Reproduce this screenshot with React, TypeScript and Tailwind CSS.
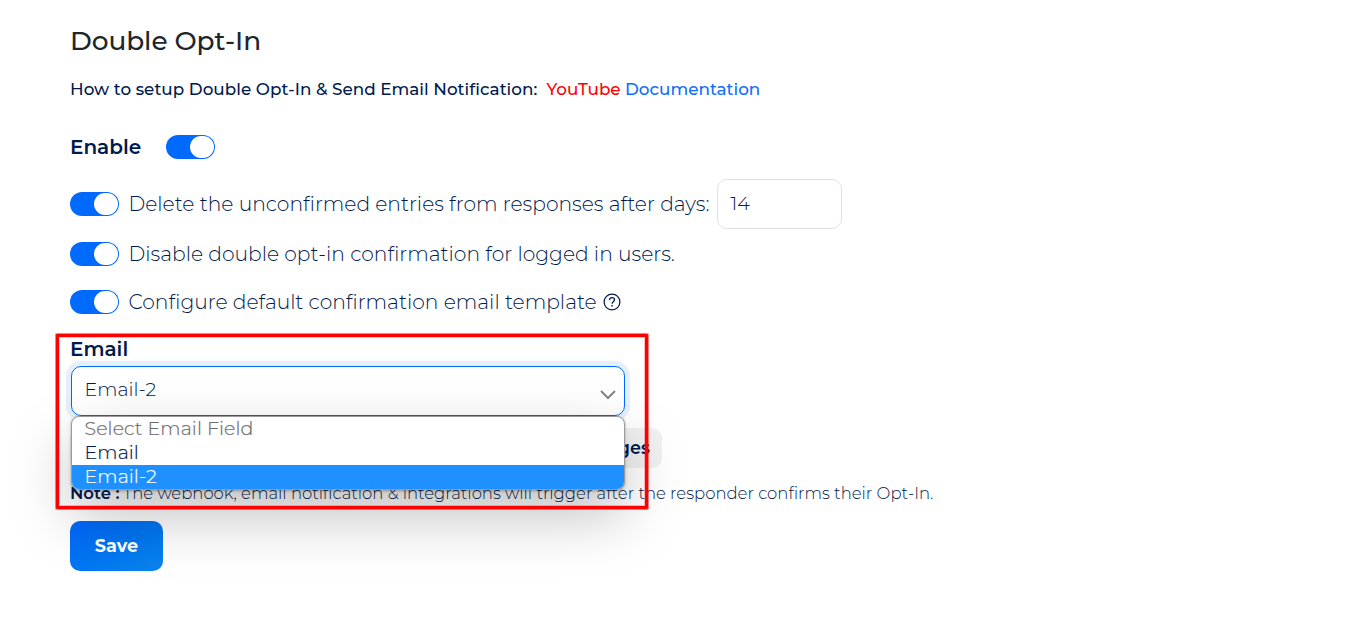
import React from "react";

function Toggle() {
  return (
    <span className="flex h-[23.5px] w-[48.5px] shrink-0 items-center justify-end rounded-full bg-[#006aff] pr-px">
      <span className="h-[21.5px] w-[23.5px] rounded-full bg-white" />
    </span>
  );
}

function HelpIcon() {
  return (
    <svg className="h-[18px] w-[18px] shrink-0" viewBox="0 0 18 18" fill="none" stroke="#001a4d">
      <circle cx="9" cy="9" r="7.9" strokeWidth="1.25" />
      <path d="M6.5 7.1c0-1.5 1.1-2.4 2.5-2.4s2.5.9 2.5 2.1c0 1.8-2.4 1.9-2.4 3.9" strokeWidth="1.3" />
      <path d="M9.1 12v1.4" strokeWidth="1.5" />
    </svg>
  );
}

export default function App() {
  return (
    <main className="h-[636px] w-full overflow-hidden bg-white pl-[70px] pt-[21px] font-['Montserrat','Inter','Liberation_Sans',sans-serif] text-[#001a4d] whitespace-nowrap">
      <h1 className="flex h-10 items-center text-[26.4px] font-medium tracking-[-0.08px] text-[#212529]">
        <span>Double Opt-In</span>
      </h1>
      <p className="mt-[17px] flex h-6 items-center text-[16.8px] font-medium">
        <span className="w-[476.5px] tracking-[0.03px]">How to setup Double Opt-In &amp; Send Email Notification:</span>
        <a className="w-[78.5px] text-[#ff0000]">YouTube</a>
        <a className="text-[#0d6efd]">Documentation</a>
      </p>

      <div className="mt-[33px] flex h-6 items-center">
        <span className="w-24 text-[20px] font-semibold">Enable</span>
        <Toggle />
      </div>

      <div className="mt-5 flex h-[50px] items-center">
        <Toggle />
        <span className="ml-[10px] w-[588.5px] text-[20.25px] font-light">
          Delete the unconfirmed entries from responses after days:
        </span>
        <div className="flex h-[50px] w-[125px] items-center rounded-[10px] border border-[#dee2e6] pb-px pl-[12.5px] text-[19.2px] font-light text-[#0c2050]">
          <span>14</span>
        </div>
      </div>

      <div className="mt-[13px] flex h-6 items-center">
        <Toggle />
        <span className="ml-[10px] text-[20.25px] font-light">
          Disable double opt-in confirmation for logged in users.
        </span>
      </div>

      <div className="mt-6 flex h-6 items-center">
        <Toggle />
        <span className="ml-[10px] w-[474.5px] text-[20.25px] font-light">
          Configure default confirmation email template
        </span>
        <HelpIcon />
      </div>

      <section className="relative mt-[23px] h-[131px]">
        <h2 className="flex h-6 items-center text-[20px] font-semibold">
          <span>Email</span>
        </h2>
        <div className="ml-px mt-[5px] flex h-[50px] w-[554px] items-center justify-between rounded-[10px] border border-[#0069ff] bg-white pl-[12.5px] pr-2 text-[19px] font-light shadow-[0_0_0_5px_#e5f0fd]">
          <span className="-mt-0.5">Email-2</span>
          <svg className="mt-2 h-[10px] w-4" viewBox="0 0 16 10" fill="none" stroke="#858585" strokeWidth="2">
            <path d="M1 1l7 7 7-7" />
          </svg>
        </div>
        <div className="mt-3 flex h-10 w-[592px] items-center justify-end rounded-[10px] bg-[#f1f1f1] pr-3 text-[17.6px] font-semibold">
          <span>Messages</span>
        </div>
        <ul className="absolute left-px top-[79px] z-10 w-[554px] overflow-hidden rounded-[8px] border border-[#9a9a9a] bg-white text-[19px] font-light leading-6 tracking-[0.1px] shadow-[0_25px_60px_rgba(0,0,0,0.25),0_1px_3px_rgba(0,0,0,0.3)] [-webkit-text-stroke:0.2px]">
          <li className="h-6 pl-[12.5px] text-[#6d6d6d]">Select Email Field</li>
          <li className="h-6 pl-[12.5px]">Email</li>
          <li className="h-6 bg-[#1e90ff] pl-[12.5px] text-white">Email-2</li>
        </ul>
        <div className="pointer-events-none absolute left-[-14px] top-[-3px] z-20 h-[175px] w-[592px] rounded-[1px] border-3 border-[#ff0000] shadow-[0_0_0_1px_rgba(255,0,0,0.5),inset_0_0_0_1px_rgba(255,0,0,0.25)]" />
      </section>

      <p className="mt-[13px] flex h-6 items-center text-[16.48px]">
        <strong className="w-[53px] font-semibold">Note :</strong>
        <span className="font-light">
          The webhook, email notification &amp; integrations will trigger after the responder confirms their Opt-In.
        </span>
      </p>
      <button className="mt-4 flex h-[50px] w-[93px] items-center justify-center rounded-[10px] bg-linear-to-br from-[#0066fa] to-[#0c84ec] text-[17.6px] font-bold text-white">
        Save
      </button>
    </main>
  );
}
